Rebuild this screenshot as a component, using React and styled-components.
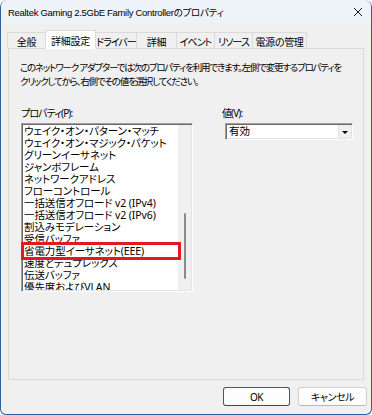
import React from "react";
import styled, { createGlobalStyle } from "styled-components";

const Global = createGlobalStyle`
  html, body { margin: 0; padding: 0; background: #ffffff; }
  * { box-sizing: border-box; }
`;

const JP = `"Noto Sans", "Noto Sans CJK JP", sans-serif`;

const Window = styled.div`
  width: 372px;
  height: 415px;
  display: flex;
  flex-direction: column;
  background: #f0f0f0;
  border: 1px solid #2e6099;
  border-top: none;
  border-radius: 7px 7px 6px 6px;
  overflow: hidden;
  font-family: ${JP};
  font-feature-settings: "palt";
  color: #000;
`;

const TitleBar = styled.div`
  height: 23px;
  flex: none;
  display: flex;
  align-items: center;
  justify-content: space-between;
  background: #eef3f9;
  padding: 0 8px 0 7px;
  font-family: "Liberation Sans", "Noto Sans CJK JP", sans-serif;
  font-size: 9.5px;
  letter-spacing: -0.3px;
  white-space: nowrap;
`;

const Body = styled.div`
  flex: 1;
  display: flex;
  flex-direction: column;
  padding: 7px 7px 7px 6px;
`;

const TabStrip = styled.div`
  display: flex;
  align-items: flex-end;
  height: 18px;
  flex: none;
  position: relative;
  z-index: 1;
`;

const Tab = styled.div`
  height: ${(p) => (p.$active ? "19px" : "16px")};
  width: ${(p) => p.$w}px;
  flex: none;
  display: flex;
  align-items: center;
  justify-content: center;
  white-space: nowrap;
  font-size: 10px;
  letter-spacing: ${(p) => (p.$tight ? "-1px" : "-0.3px")};
  background: ${(p) => (p.$active ? "#ffffff" : "#f0f0f0")};
  border: 1px solid #dadada;
  border-bottom: ${(p) => (p.$active ? "1px solid #ffffff" : "none")};
  margin-bottom: ${(p) => (p.$active ? "-1px" : "0")};
  margin-left: ${(p) => (p.$first ? "0" : "-1px")};
  padding-top: 1px;
`;

const Panel = styled.div`
  flex: none;
  height: 332px;
  margin-left: 1px;
  border: 1px solid #dadada;
  background: #f0f0f0;
  padding: 12px 11px 0 12px;
`;

const Description = styled.p`
  margin: 0 0 0 -1px;
  font-size: 9.5px;
  line-height: 14px;
  letter-spacing: -1.2px;
  white-space: nowrap;
`;

const Columns = styled.div`
  display: grid;
  grid-template-columns: 172px 1fr;
  column-gap: 29px;
  margin-top: 17px;
`;

const Label = styled.div`
  font-size: 10px;
  line-height: 14px;
  margin-bottom: 3px;
  letter-spacing: -0.9px;
  white-space: nowrap;
`;

const ListBox = styled.div`
  position: relative;
  height: 169px;
  display: flex;
  background: #fff;
  border: 1px solid;
  border-color: #a0a0a0 #ffffff #ffffff #a0a0a0;
  box-shadow: inset 1px 1px #696969, inset -1px -1px #e3e3e3;
  padding: 1px;
`;

const Items = styled.div`
  flex: 1;
  overflow: hidden;
  padding-left: 1px;
`;

const Item = styled.div`
  height: 12px;
  line-height: 12px;
  font-size: 10.5px;
  white-space: nowrap;
  letter-spacing: -0.1px;
`;

const ScrollTrack = styled.div`
  width: 13px;
  flex: none;
  background: #f0f0f0;
  display: flex;
  justify-content: center;
`;

const Thumb = styled.div`
  width: 2px;
  height: 66px;
  margin-top: 88px;
  background: #8a8a8a;
  border-radius: 1px;
`;

const Highlight = styled.div`
  position: absolute;
  left: -1px;
  top: 118px;
  width: 160px;
  height: 18px;
  border: 3px solid #e8161f;
`;

const Select = styled.div`
  margin-left: 3px;
  width: 128px;
  height: 17px;
  display: flex;
  background: #fff;
  border: 1px solid;
  border-color: #a0a0a0 #ffffff #ffffff #a0a0a0;
  box-shadow: inset 1px 1px #696969, inset -1px -1px #e3e3e3;
  padding: 1px;
`;

const SelectText = styled.div`
  flex: 1;
  font-size: 10.5px;
  line-height: 13px;
  padding-left: 2px;
`;

const Arrow = styled.div`
  width: 13px;
  flex: none;
  background: #f0f0f0;
  border-left: 1px solid #e3e3e3;
  display: flex;
  align-items: center;
  justify-content: center;
  &::after {
    content: "";
    border-left: 3px solid transparent;
    border-right: 3px solid transparent;
    border-top: 3px solid #000;
    margin-top: 1px;
  }
`;

const Footer = styled.div`
  display: flex;
  justify-content: flex-end;
  gap: 8px;
  margin-top: 7px;
  margin-right: -3px;
`;

const Button = styled.button`
  width: ${(p) => p.$w}px;
  height: 19px;
  font-family: ${JP};
  font-feature-settings: "palt";
  font-size: 10px;
  letter-spacing: -0.4px;
  background: #fdfdfd;
  border: 1px solid ${(p) => (p.$primary ? "#0067c0" : "#d0d0d0")};
  border-bottom-color: ${(p) => (p.$primary ? "#0058a8" : "#b8b8b8")};
  border-radius: 3px;
  padding: 0;
  color: #000;
`;

const props = [
  "ウェイク・オン・パターン・マッチ",
  "ウェイク・オン・マジック・パケット",
  "グリーンイーサネット",
  "ジャンボフレーム",
  "ネットワークアドレス",
  "フローコントロール",
  "一括送信オフロード v2 (IPv4)",
  "一括送信オフロード v2 (IPv6)",
  "割込みモデレーション",
  "受信バッファ",
  "省電力型イーサネット(EEE)",
  "速度とデュプレックス",
  "伝送バッファ",
  "優先度およびVLAN",
];

const tabs = [
  { label: "全般", w: 39 },
  { label: "詳細設定", w: 51, active: true },
  { label: "ドライバー", w: 42, tight: true },
  { label: "詳細", w: 41 },
  { label: "イベント", w: 39, tight: true },
  { label: "リソース", w: 39, tight: true },
  { label: "電源の管理", w: 55 },
];

const CloseIcon = () => (
  <svg width="10" height="10" viewBox="0 0 10 10">
    <path d="M1 1L9 9M9 1L1 9" stroke="#1a1a1a" strokeWidth="1" fill="none" />
  </svg>
);

const App = () => {
  return (
    <>
      <Global />
      <Window>
        <TitleBar>
          <span>Realtek Gaming 2.5GbE Family Controllerのプロパティ</span>
          <CloseIcon />
        </TitleBar>
        <Body>
          <TabStrip>
            {tabs.map((t, i) => (
              <Tab
                key={t.label}
                $w={t.w}
                $active={t.active}
                $tight={t.tight}
                $first={i === 0}
              >
                {t.label}
              </Tab>
            ))}
          </TabStrip>
          <Panel>
            <Description>
              このネットワーク アダプターでは次のプロパティを利用できます。左側で変更するプロパティを
              <br />
              クリックしてから、右側でその値を選択してください。
            </Description>
            <Columns>
              <div>
                <Label>プロパティ(P):</Label>
                <ListBox>
                  <Items>
                    {props.map((p) => (
                      <Item key={p}>{p}</Item>
                    ))}
                  </Items>
                  <ScrollTrack>
                    <Thumb />
                  </ScrollTrack>
                  <Highlight />
                </ListBox>
              </div>
              <div>
                <Label>値(V):</Label>
                <Select>
                  <SelectText>有効</SelectText>
                  <Arrow />
                </Select>
              </div>
            </Columns>
          </Panel>
          <Footer>
            <Button $w={67} $primary>
              OK
            </Button>
            <Button $w={69}>キャンセル</Button>
          </Footer>
        </Body>
      </Window>
    </>
  );
};

export default App;
